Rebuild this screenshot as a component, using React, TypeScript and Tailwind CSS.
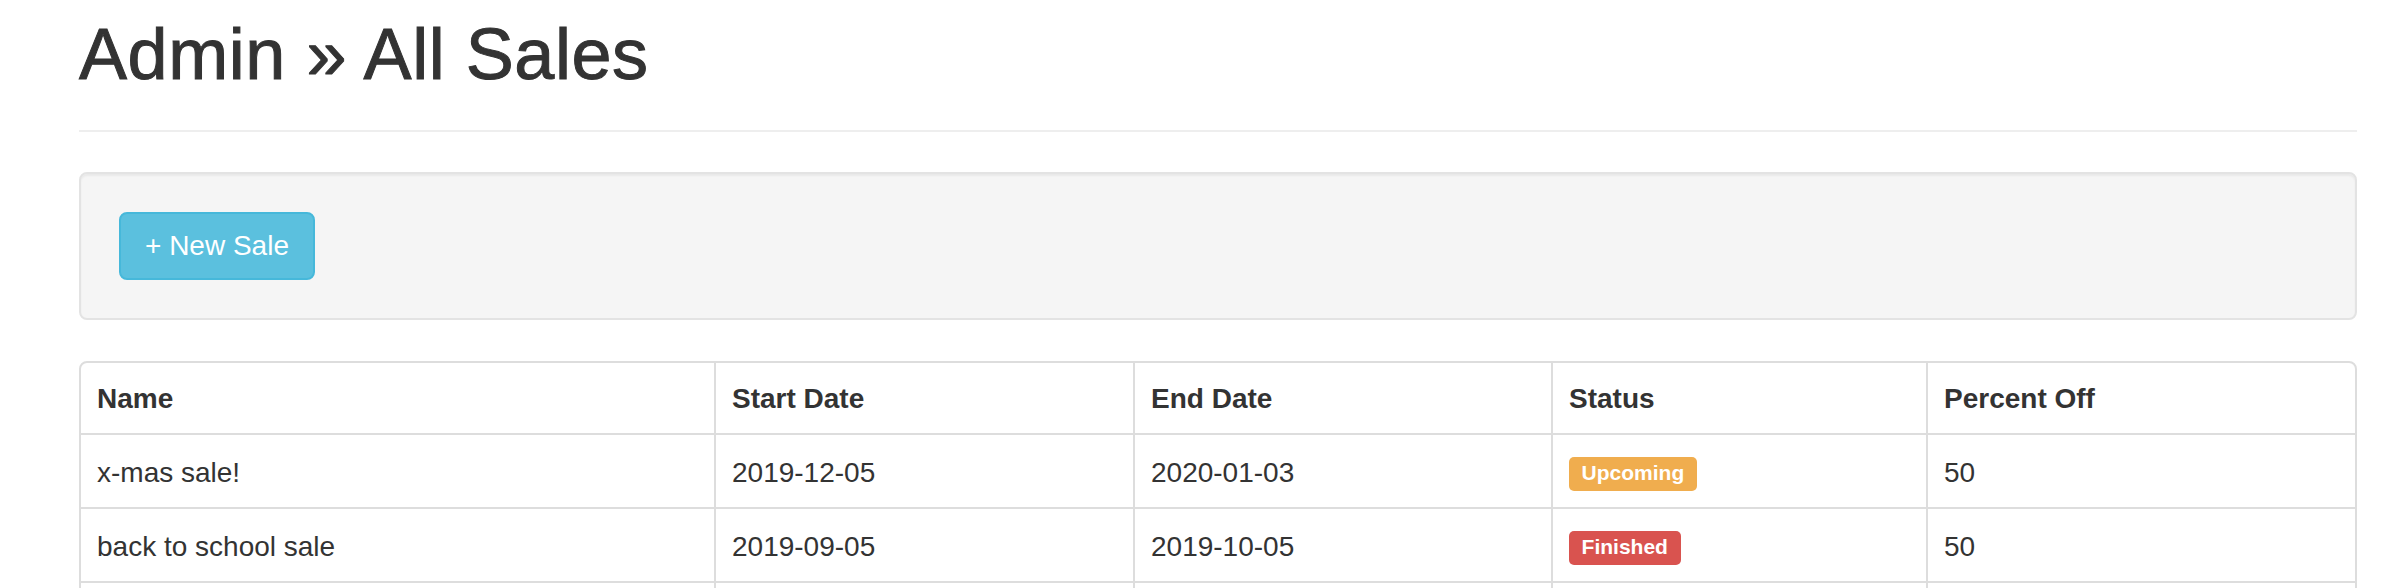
import React from 'react';

type Sale = { name: string; start: string; end: string; status: 'Upcoming' | 'Finished' | ''; off: string };

const sales: Sale[] = [
  { name: 'x-mas sale!', start: '2019-12-05', end: '2020-01-03', status: 'Upcoming', off: '50' },
  { name: 'back to school sale', start: '2019-09-05', end: '2019-10-05', status: 'Finished', off: '50' },
  // next row starts right at the bottom edge of the view
  { name: '', start: '', end: '', status: '', off: '' },
];

const cols = ['Name', 'Start Date', 'End Date', 'Status', 'Percent Off'];
const widths = ['w-[635px]', 'w-[419px]', 'w-[418px]', 'w-[375px]', 'w-[427px]'];

function StatusLabel({ status }: { status: Sale['status'] }) {
  if (!status) return null;
  return (
    <span
      className={
        'inline-block rounded-[5px] px-[12.6px] pt-[5px] pb-[7px] text-[21px] font-bold leading-[22px] text-white align-[2px] ' +
        (status === 'Upcoming' ? 'bg-[#f0ad4e]' : 'bg-[#d9534f]')
      }
    >
      {status}
    </span>
  );
}

export default function App() {
  return (
    <div className="min-h-screen bg-white text-[#333] font-['Liberation_Sans','Helvetica_Neue',Arial,sans-serif]">
      <div className="ml-[79px] w-[2278px]">
        <div className="pt-[15px] pb-[18px] border-b-2 border-[#eee]">
          <h1 className="text-[72px] leading-[79px] font-normal mb-[18px] tracking-[0.55px] [-webkit-text-stroke:1px_#333]">
            Admin » All Sales
          </h1>
        </div>

        <div className="mt-[40px] mb-[41px] rounded-lg border-2 border-[#e3e3e3] bg-[#f5f5f5] p-[38px] shadow-[inset_0_2px_2px_rgba(0,0,0,0.05)]">
          <button className="rounded-lg border-2 border-[#46b8da] bg-[#5bc0de] px-6 py-3 text-[28px] leading-[40px] text-white">
            + New Sale
          </button>
        </div>

        <div className="rounded-lg border-2 border-[#ddd] overflow-hidden">
          <table className="w-full table-fixed border-separate border-spacing-0 text-[28px] leading-[40px]">
            <thead>
              <tr>
                {cols.map((c, i) => (
                  <th
                    key={c}
                    className={
                      widths[i] +
                      ' px-4 pt-4 pb-[14px] text-left font-bold align-bottom border-b-2 border-[#ddd] ' +
                      (i < cols.length - 1 ? 'border-r-2' : '')
                    }
                  >
                    {c}
                  </th>
                ))}
              </tr>
            </thead>
            <tbody>
              {sales.map((s, r) => {
                const cells = [s.name, s.start, s.end, null, s.off];
                return (
                  <tr key={r}>
                    {cells.map((v, i) => (
                      <td
                        key={i}
                        className={
                          'px-4 pt-[18px] pb-[14px] align-top border-b-2 border-[#ddd] ' +
                          (i < cells.length - 1 ? 'border-r-2' : '')
                        }
                      >
                        {i === 3 ? <StatusLabel status={s.status} /> : v || '\u00a0'}
                      </td>
                    ))}
                  </tr>
                );
              })}
            </tbody>
          </table>
        </div>
      </div>
    </div>
  );
}
